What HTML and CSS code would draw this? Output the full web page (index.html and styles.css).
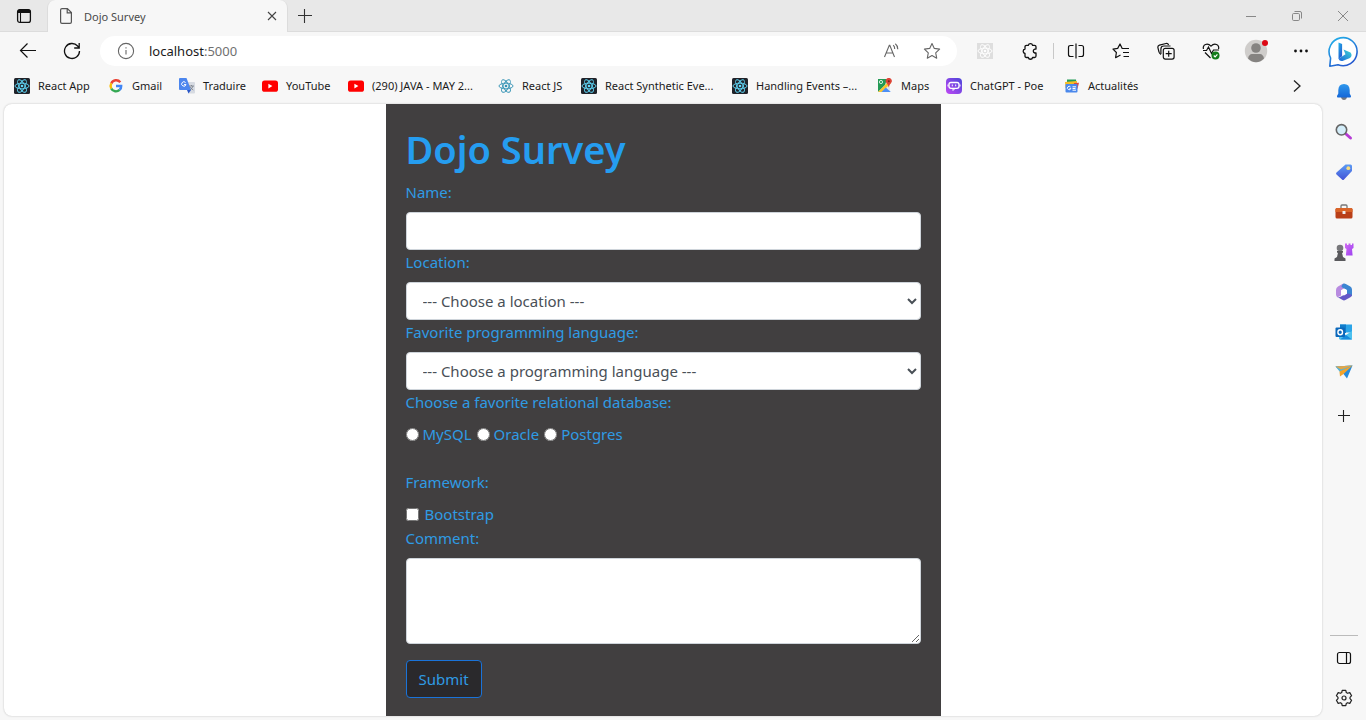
FILE: index.html
```html
<!DOCTYPE html>
<html lang="en">
<head>
<meta charset="utf-8">
<meta name="viewport" content="width=device-width, initial-scale=1">
<title>Dojo Survey</title>
<link rel="stylesheet" href="styles.css">
</head>
<body>
<svg class="defs" aria-hidden="true">
  <defs>
    <symbol id="atom" viewBox="0 0 16 16">
      <g fill="none" stroke="currentColor" stroke-width="0.9">
        <ellipse cx="8" cy="8" rx="7" ry="2.8"/>
        <ellipse cx="8" cy="8" rx="7" ry="2.8" transform="rotate(60 8 8)"/>
        <ellipse cx="8" cy="8" rx="7" ry="2.8" transform="rotate(120 8 8)"/>
      </g>
      <circle cx="8" cy="8" r="1.3" fill="currentColor"/>
    </symbol>
    <symbol id="youtube" viewBox="0 0 16 16">
      <rect x="0" y="2.4" width="16" height="11.4" rx="2.6" fill="#f00"/>
      <path d="M6.4 5.8v4.6l4-2.3z" fill="#fff"/>
    </symbol>
    <linearGradient id="bingA" x1="0" y1="0" x2="0.6" y2="1"><stop offset="0" stop-color="#22b5ea"/><stop offset="1" stop-color="#2459cf"/></linearGradient>
    <linearGradient id="bingB" x1="0" y1="1" x2="1" y2="0"><stop offset="0" stop-color="#1a66dc"/><stop offset="1" stop-color="#3fd6d2"/></linearGradient>
    <linearGradient id="bell" x1="0" y1="0" x2="0" y2="1"><stop offset="0" stop-color="#2f98ec"/><stop offset="1" stop-color="#1467d8"/></linearGradient>
    <linearGradient id="tag" x1="0" y1="0" x2="0" y2="1"><stop offset="0" stop-color="#5c9bf5"/><stop offset="1" stop-color="#4353d6"/></linearGradient>
    <linearGradient id="rook" x1="0" y1="0" x2="1" y2="1"><stop offset="0" stop-color="#d26cf2"/><stop offset="1" stop-color="#9a3ff0"/></linearGradient>
    <linearGradient id="poe" x1="1" y1="0" x2="0" y2="1"><stop offset="0" stop-color="#4a45d8"/><stop offset="1" stop-color="#c048f4"/></linearGradient>
  </defs>
</svg>

<div class="window">
  <header class="titlebar">
    <button class="tool tab-menu" aria-label="Tab actions">
      <svg width="16" height="16" viewBox="0 0 16 16"><rect x="1.6" y="1.6" width="12.8" height="12.8" rx="2.2" fill="none" stroke="#111" stroke-width="1.3"/><path d="M1.5 5V3.5q0-2 2-2h9q2 0 2 2V5z" fill="#111"/><path d="M4.5 5v9" stroke="#111" stroke-width="1.1"/></svg>
    </button>
    <div class="tab">
      <svg width="14" height="18" viewBox="0 0 14 18" fill="none" stroke="#555" stroke-width="1.2"><path d="M8.4 1.6H3Q1.6 1.6 1.6 3v12q0 1.4 1.4 1.4h8q1.4 0 1.4-1.4V5.6zM8.2 1.8v4h4"/></svg>
      <span class="tab-title">Dojo Survey</span>
      <button class="tab-close" aria-label="Close tab"><svg width="10" height="10" viewBox="0 0 10 10" stroke="#444" stroke-width="1.1"><path d="M1 1l8 8M9 1L1 9"/></svg></button>
    </div>
    <button class="new-tab" aria-label="New tab"><svg width="16" height="16" viewBox="0 0 16 16" stroke="#333" stroke-width="1.1"><path d="M1 7.500h14M7.500 1v14"/></svg></button>
    <div class="window-controls">
      <button aria-label="Minimize"><svg width="12" height="12" viewBox="0 0 12 12" stroke="#888"><path d="M1 6.5h10"/></svg></button>
      <button aria-label="Restore"><svg width="12" height="12" viewBox="0 0 12 12" fill="none" stroke="#888"><rect x="1.5" y="3.5" width="7" height="7" rx="1.2"/><path d="M3.5 1.5H9q1.5 0 1.5 1.5v5.5"/></svg></button>
      <button aria-label="Close window"><svg width="12" height="12" viewBox="0 0 12 12" stroke="#888"><path d="M1 1l10 10M11 1L1 11"/></svg></button>
    </div>
  </header>

  <div class="body">
    <div class="main">
      <div class="toolbar">
        <button class="tool nav" aria-label="Back"><svg width="18" height="18" viewBox="0 0 18 18" fill="none" stroke="#111" stroke-width="1.2"><path d="M17 8.500H1.5M8.5 1.500L1.5 8.500l7 7"/></svg></button>
        <button class="tool nav" aria-label="Refresh"><svg width="18" height="18" viewBox="0 0 18 18" fill="none" stroke="#111" stroke-width="1.3"><path d="M16.5 9A7.5 7.5 0 1 1 14.6 4L16 5.6M16.2 1v5h-5"/></svg></button>
        <div class="address">
          <button class="tool info" aria-label="Site information"><svg width="18" height="18" viewBox="0 0 18 18" fill="none" stroke="#666" stroke-width="1.1"><circle cx="9" cy="9" r="7.6"/><path d="M9 8v4.6M9 5.2v1.3"/></svg></button>
          <span class="url">localhost<span class="port">:5000</span></span>
          <button class="tool" aria-label="Read aloud"><svg width="18" height="18" viewBox="0 0 18 18" fill="none" stroke="#666" stroke-width="1.1"><path d="M1.5 15L6.3 3.2h.5L11.5 15M3.2 11h6.6M10.2 3.2q1.600 1.500 1.500 3.700M12.300 1.800q2.600 2 2.500 5.400"/></svg></button>
          <button class="tool star" aria-label="Add to favorites"><svg width="18" height="18" viewBox="0 0 18 18" fill="none" stroke="#666" stroke-width="1.1" stroke-linejoin="round"><path d="M9 1.500l2.300 4.900 5.300.7-3.900 3.700 1 5.400L9 13.600l-4.700 2.600 1-5.400L1.400 7.100l5.300-.7z"/></svg></button>
        </div>
        <div class="actions">
          <button aria-label="React developer tools"><svg class="faded" width="16" height="16"><rect width="16" height="16" fill="#dedede"/><use href="#atom"/></svg></button>
          <button aria-label="Extensions"><svg width="18" height="18" viewBox="0 0 18 18" fill="none" stroke="#111" stroke-width="1.3" stroke-linejoin="round"><path d="M5.500 3.300H7.300a2.200 2.200 0 0 1 4.300 0H13.500q1.500 0 1.500 1.500v2.300h-1.200a2 2 0 0 0 0 3.900H15v3q0 1.500-1.500 1.500h-1.900a2.200 2.200 0 0 1-4.300 0H5.500Q4 15.500 4 14v-2.500a2.300 2.300 0 0 1 0-4.500V4.800q0-1.500 1.500-1.500z"/></svg></button>
          <span class="separator"></span>
          <button aria-label="Split screen"><svg width="18" height="18" viewBox="0 0 18 18" fill="none" stroke="#111" stroke-width="1.2"><path d="M6.500 3.500H3.500Q1.500 3.500 1.500 5.500v7q0 2 2 2H6.500M11.500 3.500h3q2 0 2 2v7q0 2-2 2h-3M9 1.500v15"/></svg></button>
          <button aria-label="Favorites"><svg width="18" height="18" viewBox="0 0 18 18" fill="none" stroke="#111" stroke-width="1.2" stroke-linejoin="round"><path d="M17 6.500h-6.800L8 2 5.700 6.400l-4.700.7 3.400 3.400-.8 5.200 4.900-2.700M11 10.500h6M11.500 14.500H17"/></svg></button>
          <button aria-label="Collections"><svg width="18" height="18" viewBox="0 0 18 18" fill="none" stroke="#111" stroke-width="1.2"><path d="M4 12.500Q2.300 11.500 2 10L.9 5.600Q.6 3.700 2.400 3.200L9 1.500q1.900-.4 2.600 1.500"/><path d="M3.900 12V7q0-3 3-3H13.500"/><rect x="6.300" y="6.300" width="10.800" height="10.800" rx="2"/><path d="M11.700 8.700v6M8.700 11.700h6"/></svg></button>
          <button aria-label="Browser essentials"><svg width="18" height="18" viewBox="0 0 18 18" fill="none" stroke="#111" stroke-width="1.2"><path d="M1.400 7C.5 2.500 5.500.5 9 4.200 12.500.5 17.500 2.500 16.600 7M3 10.500l5.500 5.500M1 8.500h3.500L6.500 5l3 6.500 2-3.500h5.500"/><circle cx="13.500" cy="13.500" r="4" fill="#137c1b" stroke="none"/><path d="M11.800 13.500l1.300 1.300 2.300-2.500" stroke="#fff"/></svg></button>
          <button aria-label="Profile"><svg width="26" height="26" viewBox="0 0 26 26"><circle cx="13" cy="13" r="11.2" fill="#cfcdcb"/><circle cx="13" cy="10" r="4.8" fill="#858381"/><path d="M5 20.500Q6 16 9 16h8q3 0 4 4.500-3.300 3.700-8 3.700t-8-3.700z" fill="#858381"/><circle cx="22" cy="5" r="3" fill="#dc0714"/></svg></button>
          <button aria-label="Settings and more"><svg width="16" height="16" viewBox="0 0 16 16" fill="#111"><circle cx="2.500" cy="8" r="1.400"/><circle cx="8" cy="8" r="1.400"/><circle cx="13.500" cy="8" r="1.400"/></svg></button>
        </div>
      </div>

      <nav class="bookmarks" aria-label="Favorites bar">
        <a href="#"><svg class="react-dark" width="16" height="16"><rect width="16" height="16" rx="1.500" fill="#20232a"/><use href="#atom"/></svg><span>React App</span></a>
        <a href="#"><svg width="16" height="16" viewBox="0 0 16 16" fill="none" stroke-width="2.400"><path d="M12.300 4.200A5.300 5.300 0 0 0 3.300 5.400" stroke="#ea4335"/><path d="M3.300 5.400a5.300 5.300 0 0 0 0 5.200" stroke="#fbbc05"/><path d="M3.300 10.600a5.300 5.300 0 0 0 8.300 1.300" stroke="#34a853"/><path d="M11.600 11.900Q13.300 10.300 13.200 8H8" stroke="#4285f4"/></svg><span>Gmail</span></a>
        <a href="#"><svg width="16" height="16" viewBox="0 0 16 16"><path d="M6 4h9q1 0 1 1v9.500q0 1-1 1H9.500z" fill="#d7dbe2"/><path d="M1 0h6.500L12 12H1q-1 0-1-1V1q0-1 1-1z" fill="#4c86ee"/><path d="M8 12h4l-2.500 3.500z" fill="#2956c8"/><path d="M6.600 4.600A2.200 2.200 0 1 0 7 6.600H5" fill="none" stroke="#fff"/><path d="M10 8h5M12.500 7v1M14 8q-.8 2.800-3 4M11.300 9q1 2 3 3" fill="none" stroke="#737b87" stroke-width=".8"/></svg><span>Traduire</span></a>
        <a href="#"><svg width="16" height="16"><use href="#youtube"/></svg><span>YouTube</span></a>
        <a href="#"><svg width="16" height="16"><use href="#youtube"/></svg><span>(290) JAVA - MAY 2...</span></a>
        <a href="#"><svg class="react-light" width="16" height="16"><use href="#atom"/></svg><span>React JS</span></a>
        <a href="#"><svg class="react-dark" width="16" height="16"><rect width="16" height="16" rx="1.500" fill="#20232a"/><use href="#atom"/></svg><span>React Synthetic Eve...</span></a>
        <a href="#"><svg class="react-dark" width="16" height="16"><rect width="16" height="16" rx="1.500" fill="#20232a"/><use href="#atom"/></svg><span>Handling Events –...</span></a>
        <a href="#"><svg width="16" height="16" viewBox="0 0 16 16"><path d="M1 1h12v13H1z" fill="#e5e8eb"/><path d="M1 1h9L8 7l-7 7z" fill="#249a55"/><path d="M1 14L12 3l2 2-9 9z" fill="#fbc52d"/><path d="M4.500 14L8.800 9.500l5 4.500z" fill="#4d8ff5"/><circle cx="4" cy="4" r="1.600" fill="none" stroke="#fff" stroke-width=".8"/><path d="M11.700 9.500Q11.500 7 9.500 5A3 3 0 1 1 14 5q-2 2-2.300 4.500z" fill="#dc4437"/><circle cx="11.800" cy="3.300" r="1" fill="#7d2018"/></svg><span>Maps</span></a>
        <a href="#"><svg width="16" height="16" viewBox="0 0 16 16"><rect width="16" height="16" rx="4" fill="url(#poe)"/><rect x="3" y="4.500" width="10" height="5.800" rx="2" fill="none" stroke="#fff" stroke-width="1.300"/><path d="M6.300 6.500v1.800M9.700 6.500v1.800M7 10.500v2l2-2M2 6.500v2M14 6.500v2" fill="none" stroke="#fff"/></svg><span>ChatGPT - Poe</span></a>
        <a href="#"><svg width="16" height="16" viewBox="0 0 16 16"><path d="M3 1.500h9l.7 5H3z" fill="#249b56"/><path d="M1 4l12-1-.5 6-11 1z" fill="#f6bd24"/><path d="M10 5l5-.3-1.500 6-4-1z" fill="#dd4a3b"/><rect x="1.500" y="6" width="12" height="8.500" rx="1" fill="#4a88ec"/><path d="M6.500 9A1.700 1.700 0 1 0 6.800 10.500H5.500M8.500 8.800h3.500M8.500 10.500h3M8.500 12.200h3.500" fill="none" stroke="#fff" stroke-width="1"/></svg><span>Actualités</span></a>
        <button class="tool more" aria-label="More favorites"><svg width="10" height="14" viewBox="0 0 10 14" fill="none" stroke="#222" stroke-width="1.300"><path d="M2 1.500L8 7l-6 5.500"/></svg></button>
      </nav>

      <main class="page">
        <form class="survey">
          <h1>Dojo Survey</h1>
          <label for="name">Name:</label>
          <input class="control" id="name" type="text">
          <label for="location">Location:</label>
          <select class="control" id="location"><option>--- Choose a location ---</option></select>
          <label for="language">Favorite programming language:</label>
          <select class="control" id="language"><option>--- Choose a programming language ---</option></select>
          <p class="legend">Choose a favorite relational database:</p>
          <div class="choices databases">
            <label><input type="radio" name="db">MySQL</label>
            <label><input type="radio" name="db">Oracle</label>
            <label><input type="radio" name="db">Postgres</label>
          </div>
          <p class="legend">Framework:</p>
          <div class="choices frameworks">
            <label><input type="checkbox" name="framework">Bootstrap</label>
          </div>
          <label for="comment">Comment:</label>
          <textarea class="control comment" id="comment"></textarea>
          <button class="submit" type="button">Submit</button>
        </form>
      </main>
    </div>

    <aside class="sidebar" aria-label="Sidebar">
      <button aria-label="Bing chat"><svg width="32" height="32" viewBox="0 0 32 32"><path d="M1.800 30.200L2.600 22A14 14 0 1 1 10 28.700z" fill="#fff" stroke="url(#bingA)" stroke-width="1.600" stroke-linejoin="round"/><path d="M10.500 6.500l3.600 1.400v12.400L10.500 23z" fill="url(#bingA)"/><path d="M10.500 22.700l7-4.500-2-4.700 7 3q2.400 3-.5 5.400L14.500 25q-3 .5-4-2.300z" fill="url(#bingB)"/></svg></button>
      <button aria-label="Notifications"><svg width="18" height="18" viewBox="0 0 18 18"><path d="M6 14h6q-.5 3-3 3t-3-3z" fill="#727780"/><path d="M9 1q5.500 0 5.700 6v3.500L16 13q.3 1.500-1 1.500H3q-1.300 0-1-1.500l1.300-2.500V7Q3.500 1 9 1z" fill="url(#bell)"/></svg></button>
      <button aria-label="Search"><svg width="18" height="18" viewBox="0 0 18 18"><path d="M11 11l4.500 4" stroke="#b63bd5" stroke-width="3" stroke-linecap="round"/><circle cx="6.500" cy="6.800" r="5.200" fill="#d3edf9" stroke="#666" stroke-width="1.600"/></svg></button>
      <button aria-label="Shopping"><svg width="18" height="18" viewBox="0 0 18 18"><path d="M10.500 1.500h5q1.500 0 1.500 1.500v5L9 16.500q-1 1-2 0L1.500 11.500q-1-1 0-2z" fill="url(#tag)"/><circle cx="13.300" cy="5.200" r="1.900" fill="#f7dc7f"/></svg></button>
      <button aria-label="Tools"><svg width="18" height="18" viewBox="0 0 18 18"><path d="M6 5V3q0-1 1-1h4q1 0 1 1v2" fill="none" stroke="#777" stroke-width="1.300"/><rect x=".5" y="5" width="17" height="10.500" rx="1.500" fill="#b93f18"/><path d="M.5 9V6.500Q.5 5 2 5h14q1.500 0 1.500 1.500V9z" fill="#da6428"/><rect x="7.500" y="8" width="3" height="3" rx=".6" fill="#eee"/></svg></button>
      <button aria-label="Games"><svg width="20" height="20" viewBox="0 0 20 20"><path d="M11 1.500h2v1.500h1.500V1.500h2V3H18V1.500h1.500V6L18 7l.6 6.500h-6.700L12.500 7 11 6z" fill="url(#rook)"/><circle cx="6" cy="6" r="3.300" fill="#77777a"/><path d="M3 9h6v1.700H8l1 4.300 2.500 1.500V19H.5v-2.500L3 15l1-4.300H3z" fill="#59595c"/></svg></button>
      <button aria-label="Microsoft 365"><svg width="18" height="18" viewBox="0 0 18 18"><path d="M8.300.5L3 3.500Q1 4.700 1 7v4.500q0 2 1.700 2.800L6 12.500v-5l4.500-2.300V3Q10.500 1 8.300.5z" fill="#b88be0"/><path d="M8.800.5q1-.2 2 .4l4.500 2.600Q17 4.500 17 6.500v6.800l-5-2V7L6.500 4Q6.500 1.300 8.800.5z" fill="#3c86d2"/><path d="M2 13.800q2 1 4-.3l6-3.300 4.900 1.500q0 1.800-1.500 2.500l-5 2.800q-1.400.8-2.800 0z" fill="#6558c7"/><path d="M9 5.500l3 1.800v3.400l-3 1.800-3-1.800V7.300z" fill="#fff"/></svg></button>
      <button aria-label="Outlook"><svg width="18" height="18" viewBox="0 0 18 18"><rect x="5" y="1.500" width="12" height="8" fill="#2aa4e8"/><path d="M5 1.500h6v8.500H5z" fill="#0f7ccb"/><path d="M4 9l7 3 6-4v8.500H5q-1 0-1-1z" fill="#4bc0ee"/><path d="M5 16.500l6-4.500 6 4.500z" fill="#168cdd"/><rect x=".5" y="4.500" width="9.500" height="9.500" rx="1" fill="#0b68bb"/><ellipse cx="5.200" cy="9.200" rx="2.300" ry="2.500" fill="none" stroke="#fff" stroke-width="1.400"/></svg></button>
      <button aria-label="Drop"><svg width="18" height="18" viewBox="0 0 18 18"><path d="M.5 3.500L17.500 2.500 12 15.500 8.500 11z" fill="#268bdc"/><path d="M.5 3.500L17.500 2.500 5 9z" fill="#56b4d8"/><path d="M.5 3.500L17.500 2.500 6 6.500z" fill="#e2a64a"/><path d="M4.500 8.500L17.500 2.500 8.500 11 5 13.500z" fill="#f4a329"/></svg></button>
      <button class="add" aria-label="Customize"><svg width="14" height="14" viewBox="0 0 14 14" stroke="#222" stroke-width="1.100"><path d="M1 6.500h12M6.500 1v12"/></svg></button>
      <div class="sidebar-end">
        <button aria-label="Hide sidebar"><svg width="16" height="14" viewBox="0 0 16 14" fill="none" stroke="#111" stroke-width="1.200"><rect x="1.500" y="1.500" width="13" height="11" rx="2"/><path d="M10.500 1.500v11"/></svg></button>
        <button aria-label="Settings"><svg width="18" height="18" viewBox="0 0 18 18" fill="none" stroke="#222" stroke-width="1.200" stroke-linejoin="round"><path d="M7.200 1.300h3.600l.5 2.300 1.200.7 2.300-.7 1.800 3.100L15 8.300v1.400l1.600 1.600-1.800 3.100-2.300-.7-1.200.7-.5 2.300H7.200l-.5-2.300-1.200-.7-2.300.7-1.800-3.100L3 9.700V8.300L1.400 6.700l1.800-3.100 2.300.7 1.200-.7z"/><circle cx="9" cy="9" r="2"/></svg></button>
      </div>
    </aside>
  </div>
</div>
</body>
</html>
```

FILE: styles.css
```css
* { box-sizing: border-box; }

body {
  margin: 0;
  font-family: "Noto Sans", "Open Sans", sans-serif;
  font-size: 11px;
  color: #1b1b1b;
  background: #f7f7f7;
}

button {
  display: flex;
  align-items: center;
  justify-content: center;
  padding: 0;
  border: 0;
  background: none;
  font: inherit;
  color: inherit;
}

svg { display: block; flex: none; }

.defs { position: absolute; width: 0; height: 0; }

.window {
  display: flex;
  flex-direction: column;
  min-height: 100vh;
}

/* Title bar */
.titlebar {
  display: flex;
  height: 32px;
  background: #e8e8e8;
  border-bottom: 1px solid #dcdcdc;
}

.tab-menu { width: 47px; }

.tab {
  display: flex;
  align-items: center;
  gap: 11px;
  width: 241px;
  height: 32px;
  padding: 0 9px 0 11px;
  border: 1px solid #dcdcdc;
  border-width: 0 1px;
  border-radius: 8px 8px 0 0;
  background: #f7f7f7;
  color: #4a4a4a;
}

.tab-title { flex: 1; }

.tab-close { width: 12px; height: 20px; }

.new-tab { width: 34px; }

.window-controls { display: flex; margin-left: auto; }

.window-controls button { width: 46px; }

/* Toolbar */
.body { display: flex; flex: 1; }

.main {
  display: flex;
  flex: 1;
  flex-direction: column;
  min-width: 0;
}

.toolbar {
  display: flex;
  align-items: center;
  height: 38px;
  padding-left: 6px;
}

.tool { flex: none; }

.nav { width: 44px; height: 30px; }

.address {
  display: flex;
  flex: 1;
  align-items: center;
  height: 30px;
  min-width: 0;
  margin: 0 6px;
  padding: 0 15px 0 16px;
  border-radius: 15px;
  background: #fff;
}

.address .tool { width: 20px; }

.address .star { margin-left: 20px; }

.url { flex: 1; margin-left: 13px; font-size: 13px; }

.port { color: #707070; }

.actions {
  display: flex;
  align-items: center;
  width: 360px;
  margin-right: -1px;
}

.actions button { flex: 1; height: 30px; }

.separator { width: 1px; height: 16px; background: #c8c8c8; }

.faded { color: #fff; }

/* Favorites bar */
.bookmarks {
  display: grid;
  grid-template-columns: 94px 71px 83px 86px 150px 83px 151px 145px 69px 118px 1fr 22px;
  align-items: center;
  height: 33px;
  padding: 0 14px 2px;
}

.bookmarks a {
  display: flex;
  align-items: center;
  gap: 8px;
  color: inherit;
  text-decoration: none;
  white-space: nowrap;
}

.react-dark { color: #61dafb; }

.react-light { color: #3493b4; }

/* Page */
.page {
  flex: 1;
  margin: 1px 0 4px 4px;
  overflow: hidden;
  border-radius: 8px;
  background: #fff;
  box-shadow: 0 0 2px #bbb;
}

.survey {
  max-width: 555px;
  min-height: 100%;
  margin: 0 auto;
  padding: 20px 20px 18px;
  background: #413f40;
  color: #2f9be4;
  font-size: 15px;
  line-height: 24px;
}

.survey h1 {
  margin: 0;
  padding: 1px 0 7px;
  color: #259df0;
  font-size: 38px;
  font-weight: 600;
  line-height: 48px;
}

.survey label,
.legend {
  display: block;
  margin: 0 0 8px;
}

.control {
  display: block;
  width: 100%;
  height: 38px;
  padding: 6px 12px;
  border: 1px solid #ced4da;
  border-radius: 4px;
  background: #fff;
  color: #495057;
  font: inherit;
}

.choices { display: flex; gap: 5px; }

.choices label {
  display: flex;
  align-items: center;
  gap: 4px;
  margin: 0;
}

.choices input { width: 13px; height: 13px; margin: 0; }

.databases { margin-bottom: 24px; }

.frameworks label { gap: 6px; }

.comment { height: 86px; resize: vertical; }

.submit {
  height: 38px;
  margin-top: 16px;
  padding: 0 12px;
  border: 1px solid #1a73d9;
  border-radius: 4px;
  background: #2a292c;
}

/* Sidebar */
.sidebar {
  display: flex;
  flex: none;
  flex-direction: column;
  width: 44px;
  padding-bottom: 2px;
}

.sidebar button { width: 100%; height: 40px; }

.sidebar .add { margin-top: 4px; }

.sidebar-end {
  margin: auto 8px 0;
  padding-top: 2px;
  border-top: 1px solid #bbb;
}
```
